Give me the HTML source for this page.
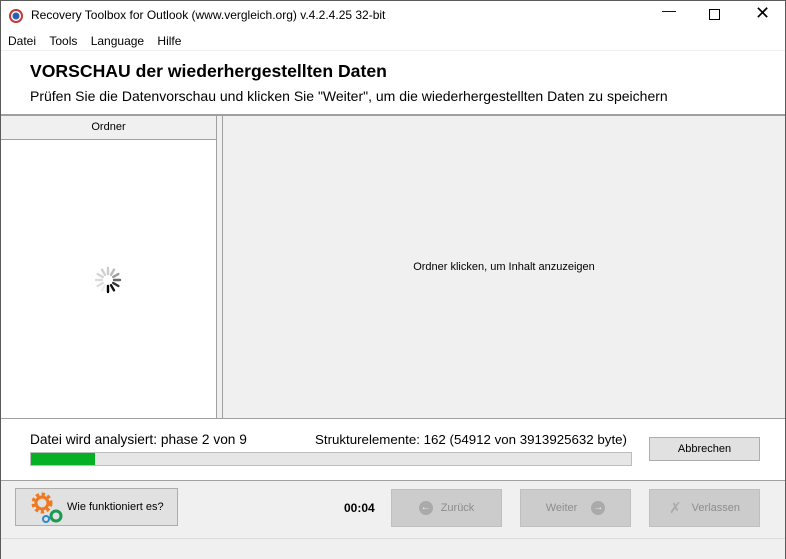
<!DOCTYPE html>
<html><head><meta charset="utf-8"><style>
*{margin:0;padding:0;box-sizing:border-box}
body{width:786px;height:559px;position:relative;background:#fff;font-family:"Liberation Sans",sans-serif;overflow:hidden;font-size:12px;color:#000}
.a{position:absolute}
.btn{position:absolute;border:1px solid #adadad;background:#e1e1e1;font-size:11px;display:flex;align-items:center;justify-content:center}
.dis{background:#cccccc;border-color:#bfbfbf;color:#8d8d8d}
</style></head><body>
<div class="a" style="left:0;top:0;width:786px;height:559px;border:1px solid #5a5a5a"></div>
<svg class="a" style="left:8px;top:8px" width="16" height="16"><circle cx="8" cy="8" r="7" fill="#c23a3a"/><circle cx="8" cy="8" r="5" fill="#fff"/><circle cx="8" cy="8" r="3.5" fill="#2a5fb0"/></svg>
<div class="a" style="left:31px;top:8px;font-size:12px">Recovery Toolbox for Outlook (www.vergleich.org) v.4.2.4.25 32-bit</div>
<div class="a" style="left:662px;top:2px;font-size:14px">—</div>
<div class="a" style="left:709px;top:9px;width:11px;height:11px;border:1px solid #000"></div>
<div class="a" style="left:755px;top:3px;font-size:18px">✕</div>
<div class="a" style="left:8px;top:34px;font-size:12px;word-spacing:0">Datei&nbsp;&nbsp;&nbsp;&nbsp;Tools&nbsp;&nbsp;&nbsp;&nbsp;Language&nbsp;&nbsp;&nbsp;&nbsp;Hilfe</div>
<div class="a" style="left:1px;top:50px;width:784px;height:1px;background:#f0f0f0"></div>
<div class="a" style="left:30px;top:61px;font-size:17.6px;font-weight:bold">VORSCHAU der wiederhergestellten Daten</div>
<div class="a" style="left:30px;top:88px;font-size:14px">Prüfen Sie die Datenvorschau und klicken Sie "Weiter", um die wiederhergestellten Daten zu speichern</div>
<div class="a" style="left:1px;top:114px;width:784px;height:2px;background:#a0a0a0"></div>
<div class="a" style="left:1px;top:116px;width:215px;height:302px;background:#fff"></div>
<div class="a" style="left:1px;top:116px;width:215px;height:24px;background:#f0f0f0;border-bottom:1px solid #a0a0a0;font-size:11px;text-align:center;line-height:23px">Ordner</div>
<div class="a" style="left:216px;top:116px;width:7px;height:302px;background:#f0f0f0;border-left:1px solid #a0a0a0;border-right:1px solid #a0a0a0"></div>
<div class="a" style="left:223px;top:116px;width:562px;height:302px;background:#f0f0f0"></div>
<div class="a" style="left:223px;top:261px;width:562px;text-align:center;font-size:11px">Ordner klicken, um Inhalt anzuzeigen</div>
<svg class="a" style="left:92px;top:264px" width="32" height="32" viewBox="-16 -16 32 32">
<g stroke-width="2.4" stroke-linecap="round">
<line x1="0" y1="-6" x2="0" y2="-12" stroke="#ccc" transform="rotate(0)"/>
<line x1="0" y1="-6" x2="0" y2="-12" stroke="#bbb" transform="rotate(30)"/>
<line x1="0" y1="-6" x2="0" y2="-12" stroke="#999" transform="rotate(60)"/>
<line x1="0" y1="-6" x2="0" y2="-12" stroke="#666" transform="rotate(90)"/>
<line x1="0" y1="-6" x2="0" y2="-12" stroke="#333" transform="rotate(120)"/>
<line x1="0" y1="-6" x2="0" y2="-12" stroke="#111" transform="rotate(150)"/>
<line x1="0" y1="-6" x2="0" y2="-12" stroke="#000" transform="rotate(180)"/>
<line x1="0" y1="-6" x2="0" y2="-12" stroke="#eee" transform="rotate(210)"/>
<line x1="0" y1="-6" x2="0" y2="-12" stroke="#ddd" transform="rotate(240)"/>
<line x1="0" y1="-6" x2="0" y2="-12" stroke="#ddd" transform="rotate(270)"/>
<line x1="0" y1="-6" x2="0" y2="-12" stroke="#d5d5d5" transform="rotate(300)"/>
<line x1="0" y1="-6" x2="0" y2="-12" stroke="#d0d0d0" transform="rotate(330)"/>
</g></svg>
<div class="a" style="left:1px;top:418px;width:784px;height:1px;background:#a0a0a0"></div>
<div class="a" style="left:30px;top:432px;font-size:13.7px">Datei wird analysiert: phase 2 von 9</div>
<div class="a" style="left:315px;top:432px;font-size:13.3px">Strukturelemente: 162 (54912 von 3913925632 byte)</div>
<div class="a" style="left:30px;top:452px;width:602px;height:14px;background:#e6e6e6;border:1px solid #bcbcbc"></div>
<div class="a" style="left:31px;top:453px;width:64px;height:12px;background:#06b025"></div>
<div class="btn" style="left:649px;top:437px;width:111px;height:24px">Abbrechen</div>
<div class="a" style="left:1px;top:480px;width:784px;height:79px;background:#f0f0f0;border-top:1px solid #a0a0a0"></div>
<div class="a" style="left:1px;top:538px;width:784px;height:1px;background:#dcdcdc"></div>
<div class="btn" style="left:15px;top:488px;width:163px;height:38px;justify-content:flex-start;padding-left:51px">Wie funktioniert es?</div>
<svg class="a" style="left:28px;top:490px" width="40" height="36">
<circle cx="14" cy="13" r="8" fill="none" stroke="#f07820" stroke-width="5" stroke-dasharray="3 2.3"/><circle cx="14" cy="13" r="6" fill="none" stroke="#f07820" stroke-width="3"/>
<circle cx="28" cy="26" r="5" fill="none" stroke="#1a9a50" stroke-width="3"/>
<circle cx="18" cy="29" r="3" fill="none" stroke="#2a8ad0" stroke-width="2"/></svg>
<div class="a" style="left:344px;top:501px;font-size:12px;font-weight:bold">00:04</div>
<div class="btn dis" style="left:391px;top:489px;width:111px;height:38px"><span style="display:inline-block;width:14px;height:14px;border-radius:50%;background:#aaa;color:#eee;font-size:10px;line-height:14px;text-align:center;margin-right:8px">←</span>Zurück</div>
<div class="btn dis" style="left:520px;top:489px;width:111px;height:38px">Weiter<span style="display:inline-block;width:14px;height:14px;border-radius:50%;background:#aaa;color:#eee;font-size:10px;line-height:14px;text-align:center;margin-left:14px">→</span></div>
<div class="btn dis" style="left:649px;top:489px;width:111px;height:38px"><span style="font-size:15px;margin-right:10px;color:#aaa">✗</span>Verlassen</div>
</body></html>
